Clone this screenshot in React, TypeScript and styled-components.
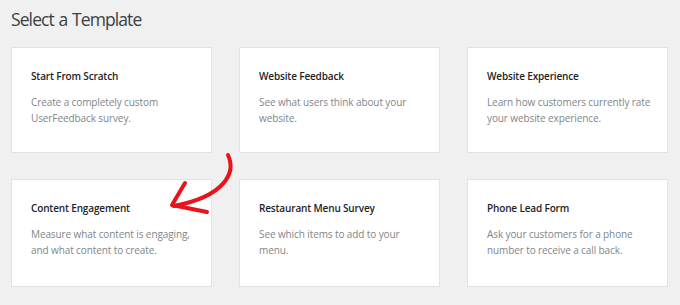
import { createGlobalStyle, styled } from "styled-components";

const GlobalStyle = createGlobalStyle`
  html, body {
    margin: 0;
    padding: 0;
    background: #f0f0f1;
  }
`;

const Page = styled.div`
  position: relative;
  width: 680px;
  height: 305px;
  padding: 5px 11px 0 11px;
  box-sizing: border-box;
  font-family: "Open Sans", "Noto Sans", sans-serif;
  background: #f0f0f1;
`;

const Heading = styled.h1`
  margin: 0 0 13px 0;
  font-size: 17.5px;
  font-weight: 400;
  line-height: 29px;
  color: #3c3f44;
  letter-spacing: -0.9px;
  word-spacing: 1px;
`;

const Grid = styled.div`
  display: grid;
  grid-template-columns: repeat(3, 201px);
  column-gap: 27px;
  row-gap: 26px;
`;

const Card = styled.div<{ $tall?: boolean }>`
  background: #fff;
  border: 1px solid #e2e2e2;
  box-sizing: border-box;
  height: ${(p) => (p.$tall ? "108px" : "106px")};
  padding: 21px 19px 0 19px;
`;

const CardTitle = styled.div`
  font-size: 10px;
  font-weight: 600;
  color: #1d2327;
  line-height: 14px;
  letter-spacing: -0.15px;
  margin-bottom: 11px;
  white-space: nowrap;
`;

const CardText = styled.div`
  font-size: 10px;
  color: #80858a;
  line-height: 16px;
  letter-spacing: -0.1px;
  white-space: nowrap;
`;

const Arrow = styled.svg`
  position: absolute;
  left: 0;
  top: 0;
  pointer-events: none;
`;

const templates = [
  { title: "Start From Scratch", text: ["Create a completely custom", "UserFeedback survey."] },
  { title: "Website Feedback", text: ["See what users think about your", "website."] },
  { title: "Website Experience", text: ["Learn how customers currently rate", "your website experience."] },
  { title: "Content Engagement", text: ["Measure what content is engaging,", "and what content to create."] },
  { title: "Restaurant Menu Survey", text: ["See which items to add to your", "menu."] },
  { title: "Phone Lead Form", text: ["Ask your customers for a phone", "number to receive a call back."] },
];

export default function App() {
  return (
    <>
      <GlobalStyle />
      <Page>
        <Heading>Select a Template</Heading>
        <Grid>
          {templates.map((t, i) => (
            <Card key={t.title} $tall={i > 2}>
              <CardTitle>{t.title}</CardTitle>
              <CardText>
                {t.text[0]}
                <br />
                {t.text[1]}
              </CardText>
            </Card>
          ))}
        </Grid>
        <Arrow width="680" height="305" viewBox="0 0 680 305">
          <path
            d="M228 155 C 236 172, 226 196, 174 206"
            fill="none"
            stroke="#e8141b"
            strokeWidth="4"
            strokeLinecap="round"
          />
          <path
            d="M185 183 L172 205 L207 212"
            fill="none"
            stroke="#e8141b"
            strokeWidth="4"
            strokeLinecap="round"
            strokeLinejoin="round"
          />
        </Arrow>
      </Page>
    </>
  );
}
